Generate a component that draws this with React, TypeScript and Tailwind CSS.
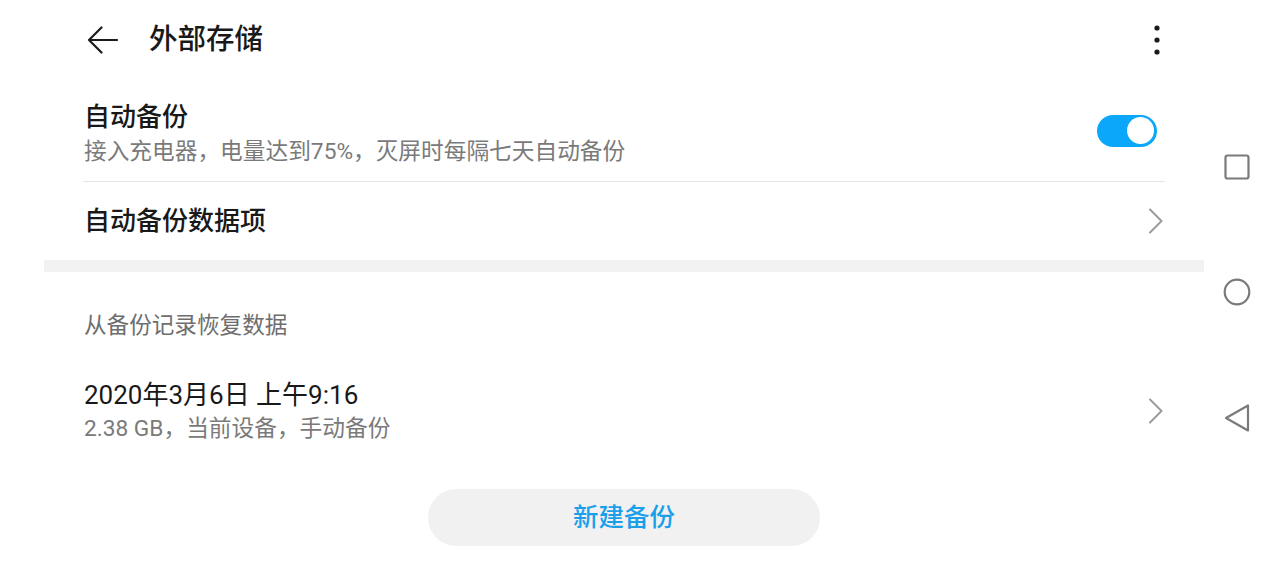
import React from "react";

const FONT = { fontFamily: 'Roboto, "Noto Sans CJK SC", "Noto Sans", sans-serif' };

function Chevron() {
  return (
    <svg width="16" height="26" viewBox="0 0 16 26" fill="none">
      <path d="M2 1.5 L13.5 13 L2 24.5" stroke="#9a9a9a" strokeWidth="2" strokeLinecap="round" strokeLinejoin="round" />
    </svg>
  );
}

export default function App() {
  return (
    <div className="w-[1269px] h-[586px] flex bg-white overflow-hidden text-[#191919]" style={FONT}>
      {/* main column */}
      <div className="w-[1205px] flex flex-col">
        {/* header */}
        <div className="h-[80px] flex items-center pl-[87px] pr-[44px]">
          <svg width="32" height="28" viewBox="0 0 32 28" fill="none">
            <path d="M2 14 H30 M14.5 1.5 L2 14 L14.5 26.5" stroke="#1a1a1a" strokeWidth="2.2" strokeLinecap="round" strokeLinejoin="round" />
          </svg>
          <div className="ml-[30px] text-[28.5px] font-medium leading-[40px] flex-1">外部存储</div>
          <svg width="8" height="32" viewBox="0 0 8 32">
            <circle cx="4" cy="4" r="2.6" fill="#1a1a1a" />
            <circle cx="4" cy="16" r="2.6" fill="#1a1a1a" />
            <circle cx="4" cy="28" r="2.6" fill="#1a1a1a" />
          </svg>
        </div>

        {/* auto backup row */}
        <div className="ml-[84px] mr-[40px] h-[101px] flex items-center">
          <div className="flex-1 flex flex-col pt-[5px]">
            <div className="text-[26px] font-medium leading-[34px]">自动备份</div>
            <div className="mt-[3px] text-[22.7px] leading-[30px] text-[#7a7a7a]">接入充电器，电量达到75%，灭屏时每隔七天自动备份</div>
          </div>
          <div className="mr-[8px] w-[60px] h-[32px] rounded-full bg-[#0aa7fb] flex items-center justify-end pr-[3px]">
            <div className="w-[27px] h-[27px] rounded-full bg-white" />
          </div>
        </div>
        <div className="ml-[83px] mr-[40px] h-[1px] bg-[#e6e6e6]" />

        {/* data items row */}
        <div className="ml-[84px] mr-[40px] h-[78px] flex items-center">
          <div className="flex-1 text-[26px] font-medium leading-[34px]">自动备份数据项</div>
          <div className="mr-[1px]"><Chevron /></div>
        </div>

        {/* gray band */}
        <div className="ml-[44px] mr-[1px] h-[12px] bg-[#f2f2f2]" />

        {/* section header */}
        <div className="ml-[84px] h-[108px] flex items-center text-[22.6px] leading-[30px] text-[#6e6e6e]">从备份记录恢复数据</div>

        {/* record row */}
        <div className="ml-[84px] mr-[40px] flex items-center">
          <div className="flex-1 flex flex-col">
            <div className="text-[26px] leading-[30px]">2020年3月6日 上午9:16</div>
            <div className="mt-[5px] text-[22.7px] leading-[28px] text-[#7a7a7a]">2.38 GB，当前设备，手动备份</div>
          </div>
          <div className="mr-[1px] -mt-[2px]"><Chevron /></div>
        </div>

        {/* button */}
        <div className="mt-[46px] ml-[428px] w-[392px] h-[57px] rounded-full bg-[#f1f1f1] flex items-center justify-center text-[25.5px] font-medium text-[#1a9feb]">
          新建备份
        </div>
      </div>

      {/* nav bar */}
      <div className="flex-1 flex flex-col items-center justify-center gap-[97px] pr-[1px]">
        <svg width="28" height="28" viewBox="0 0 28 28" fill="none">
          <rect x="2.5" y="2.5" width="23" height="23" rx="2" stroke="#7a7a7a" strokeWidth="2.2" />
        </svg>
        <svg width="28" height="28" viewBox="0 0 28 28" fill="none">
          <circle cx="14" cy="14" r="12.3" stroke="#7a7a7a" strokeWidth="2.2" />
        </svg>
        <svg width="28" height="30" viewBox="0 0 28 30" fill="none">
          <path d="M3 15 L25 2.5 V27.5 Z" stroke="#7a7a7a" strokeWidth="2.2" strokeLinejoin="round" />
        </svg>
      </div>
    </div>
  );
}
